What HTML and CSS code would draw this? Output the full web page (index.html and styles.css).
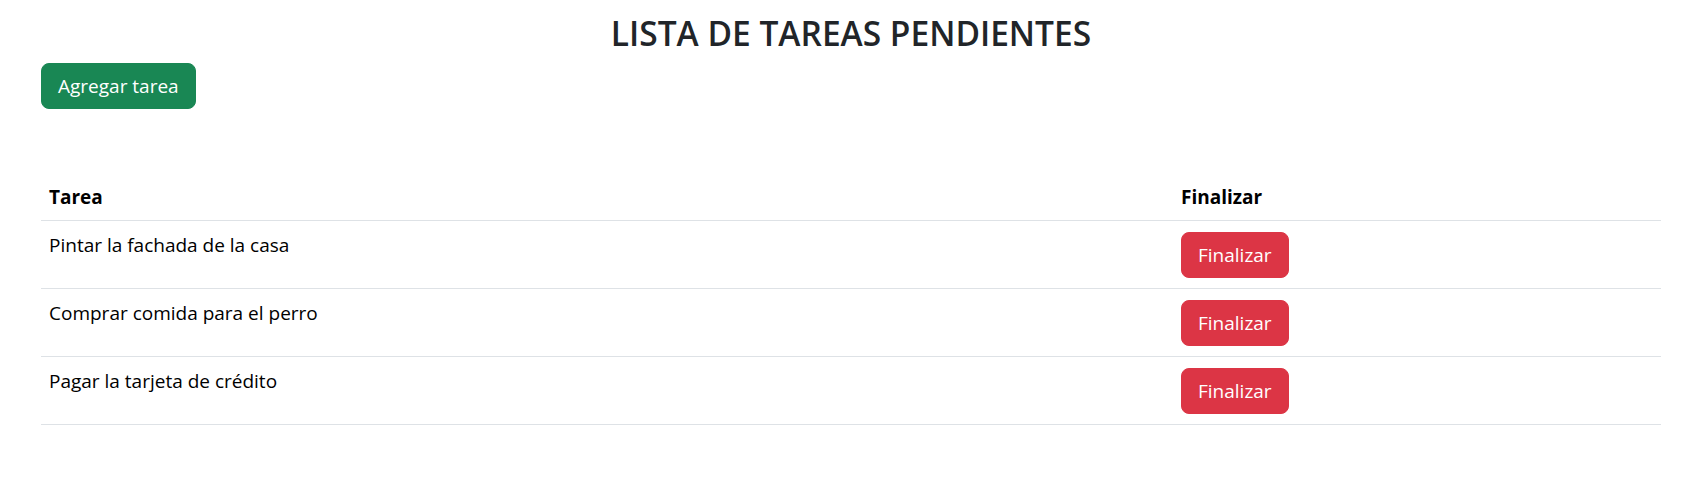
FILE: index.html
```html
<!DOCTYPE html>
<html lang="es">
<head>
<meta charset="utf-8">
<title>Lista de tareas</title>
<link rel="stylesheet" href="styles.css">
</head>
<body>
<main class="page">
  <h1 class="title">LISTA DE TAREAS PENDIENTES</h1>
  <div class="actions">
    <button class="btn btn-success">Agregar tarea</button>
  </div>
  <table class="tasks">
    <colgroup>
      <col class="col-task">
      <col class="col-action">
    </colgroup>
    <thead>
      <tr><th>Tarea</th><th>Finalizar</th></tr>
    </thead>
    <tbody>
      <tr><td>Pintar la fachada de la casa</td><td class="cell-action"><button class="btn btn-danger">Finalizar</button></td></tr>
      <tr><td>Comprar comida para el perro</td><td class="cell-action"><button class="btn btn-danger">Finalizar</button></td></tr>
      <tr><td>Pagar la tarjeta de crédito</td><td class="cell-action"><button class="btn btn-danger">Finalizar</button></td></tr>
    </tbody>
  </table>
</main>
</body>
</html>
```

FILE: styles.css
```css
* { box-sizing: border-box; }
html, body { margin: 0; padding: 0; background: #fff; }
body {
  font-family: "Open Sans", "Noto Sans", "Liberation Sans", sans-serif;
  color: #212529;
  font-size: 16px;
  line-height: 1.5;
}
.page {
  padding: 0 35px 0 41px;
}
.title {
  margin: 0;
  padding-top: 13px;
  text-align: center;
  font-size: 33.5px;
  font-weight: 600;
  line-height: 1.2;
  color: #212529;
}
.actions {
  margin-top: 10px;
  display: flex;
}
.btn {
  font-family: inherit;
  font-size: 19px;
  line-height: 30px;
  padding: 7px 16px;
  border: 1px solid transparent;
  border-radius: 8px;
  color: #fff;
  cursor: pointer;
}
.btn-success { background: #198754; border-color: #198754; }
.btn-danger { background: #dc3545; border-color: #dc3545; }
.tasks {
  margin-top: 65px;
  width: 100%;
  border-collapse: collapse;
  table-layout: fixed;
  font-size: 19px;
  line-height: 30px;
  color: #000;
}
.col-task { width: 1132px; }
.tasks th {
  text-align: left;
  font-weight: 700;
  padding: 8px;
  border-bottom: 1px solid #dee2e6;
}
.tasks td {
  padding: 9px 8px;
  vertical-align: top;
  border-bottom: 1px solid #dee2e6;
}
.tasks td.cell-action {
  padding: 11px 8px 10px;
}
.tasks td.cell-action .btn { display: block; }
```
